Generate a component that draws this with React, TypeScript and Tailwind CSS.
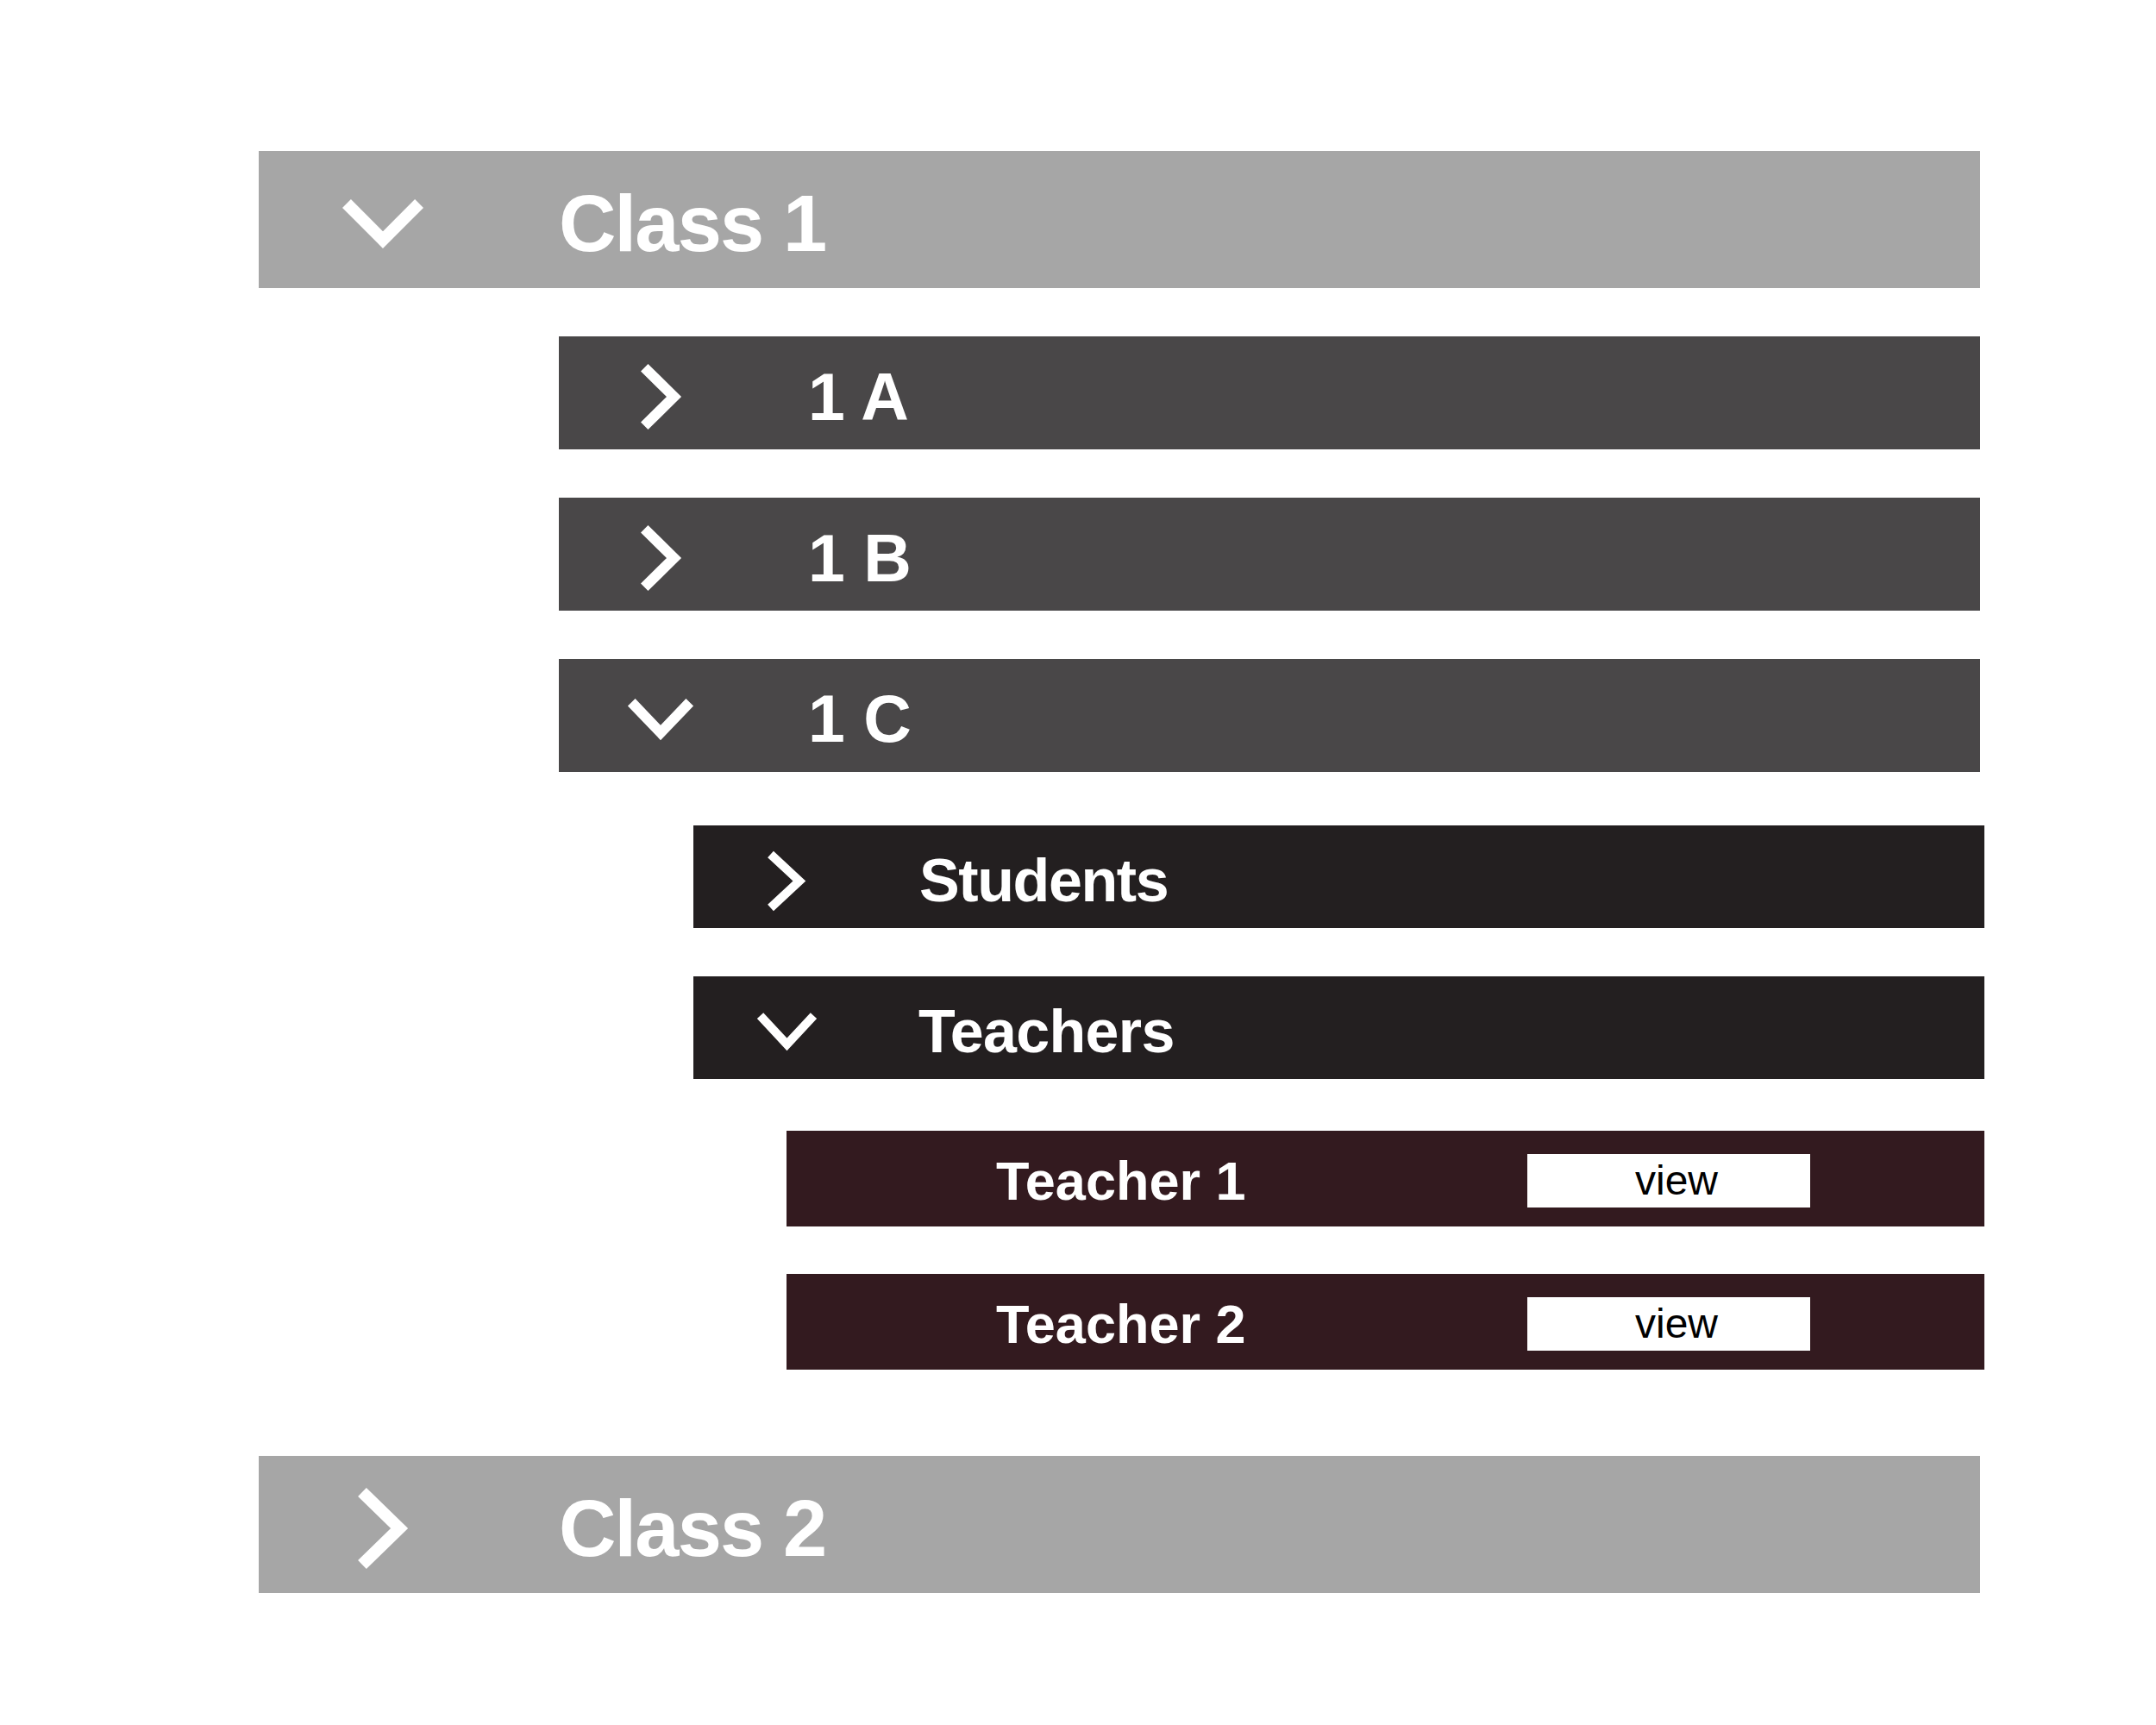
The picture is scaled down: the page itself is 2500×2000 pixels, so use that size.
type Dir = "down" | "right";

function Chevron({ dir, w, h, s }: { dir: Dir; w: number; h: number; s: number }) {
  const pad = s * 0.354;
  const miter = s * 0.707;
  const pts =
    dir === "down"
      ? `${pad},${pad} ${w / 2},${h - miter} ${w - pad},${pad}`
      : `${pad},${pad} ${w - miter},${h / 2} ${pad},${h - pad}`;
  return (
    <svg width={w} height={h} viewBox={`0 0 ${w} ${h}`} className="block overflow-visible">
      <polyline points={pts} fill="none" stroke="#ffffff" strokeWidth={s} strokeLinejoin="miter" strokeLinecap="butt" />
    </svg>
  );
}

const font = "font-['Liberation_Sans',Arial,sans-serif]";

export default function App() {
  return (
    <div className={`min-h-[2000px] w-[2500px] bg-white pt-[175px] ${font}`}>
      <div className="ml-[300px] w-[1996px] flex flex-col">
        {/* Class 1 */}
        <div className="h-[159px] bg-[#a6a6a6] flex items-center pl-[97px] pt-[9px]">
          <div className="w-[94px] flex justify-center">
            <Chevron dir="down" w={94} h={57} s={14} />
          </div>
          <span className="ml-[157px] text-[92px] leading-none font-bold tracking-[-0.02em] text-white">Class 1</span>
        </div>

        {/* sections of class 1 */}
        <div className="ml-[348px] mt-[56px] flex flex-col gap-[56px]">
          {["1 A", "1 B"].map((name) => (
            <div key={name} className="h-[131px] bg-[#494748] flex items-center pl-[80px] pt-[9px]">
              <div className="w-[76px] flex justify-center">
                <Chevron dir="right" w={47} h={76} s={12} />
              </div>
              <span className="ml-[133px] text-[77px] leading-none font-bold text-white whitespace-pre">{name}</span>
            </div>
          ))}
          <div className="h-[131px] bg-[#494748] flex items-center pl-[80px] pt-[8px]">
            <div className="w-[76px] flex justify-center">
              <Chevron dir="down" w={76} h={48} s={12} />
            </div>
            <span className="ml-[133px] text-[77px] leading-none font-bold text-white whitespace-pre">1 C</span>
          </div>
        </div>

        {/* 1 C contents */}
        <div className="ml-[504px] -mr-[5px] mt-[62px] flex flex-col gap-[56px]">
          <div className="h-[119px] bg-[#231f20] flex items-center pl-[73px] pt-[9px]">
            <div className="w-[70px] flex justify-center">
              <Chevron dir="right" w={44} h={69} s={10} />
            </div>
            <span className="ml-[119px] text-[70px] leading-none font-bold tracking-[-0.02em] text-white">Students</span>
          </div>
          <div className="h-[119px] bg-[#231f20] flex items-center pl-[73px] pt-[8px]">
            <div className="w-[70px] flex justify-center">
              <Chevron dir="down" w={69} h={44} s={10} />
            </div>
            <span className="ml-[118px] text-[70px] leading-none font-bold tracking-[-0.01em] text-white">Teachers</span>
          </div>
        </div>

        {/* teachers */}
        <div className="ml-[612px] -mr-[5px] mt-[60px] flex flex-col gap-[55px]">
          {["Teacher 1", "Teacher 2"].map((t) => (
            <div key={t} className="h-[111px] bg-[#331a1f] flex items-center justify-between pl-[243px] pr-[202px] pt-[6px]">
              <span className="text-[63px] leading-none font-bold text-white">{t}</span>
              <button className="w-[328px] h-[62px] bg-white flex items-center justify-center pl-[18px] text-[48px] leading-none text-black -mt-[2px]">
                view
              </button>
            </div>
          ))}
        </div>

        {/* Class 2 */}
        <div className="mt-[100px] h-[159px] bg-[#a6a6a6] flex items-center pl-[97px] pt-[9px]">
          <div className="w-[94px] flex justify-center">
            <Chevron dir="right" w={58} h={94} s={14} />
          </div>
          <span className="ml-[157px] text-[92px] leading-none font-bold tracking-[-0.02em] text-white">Class 2</span>
        </div>
      </div>
    </div>
  );
}
